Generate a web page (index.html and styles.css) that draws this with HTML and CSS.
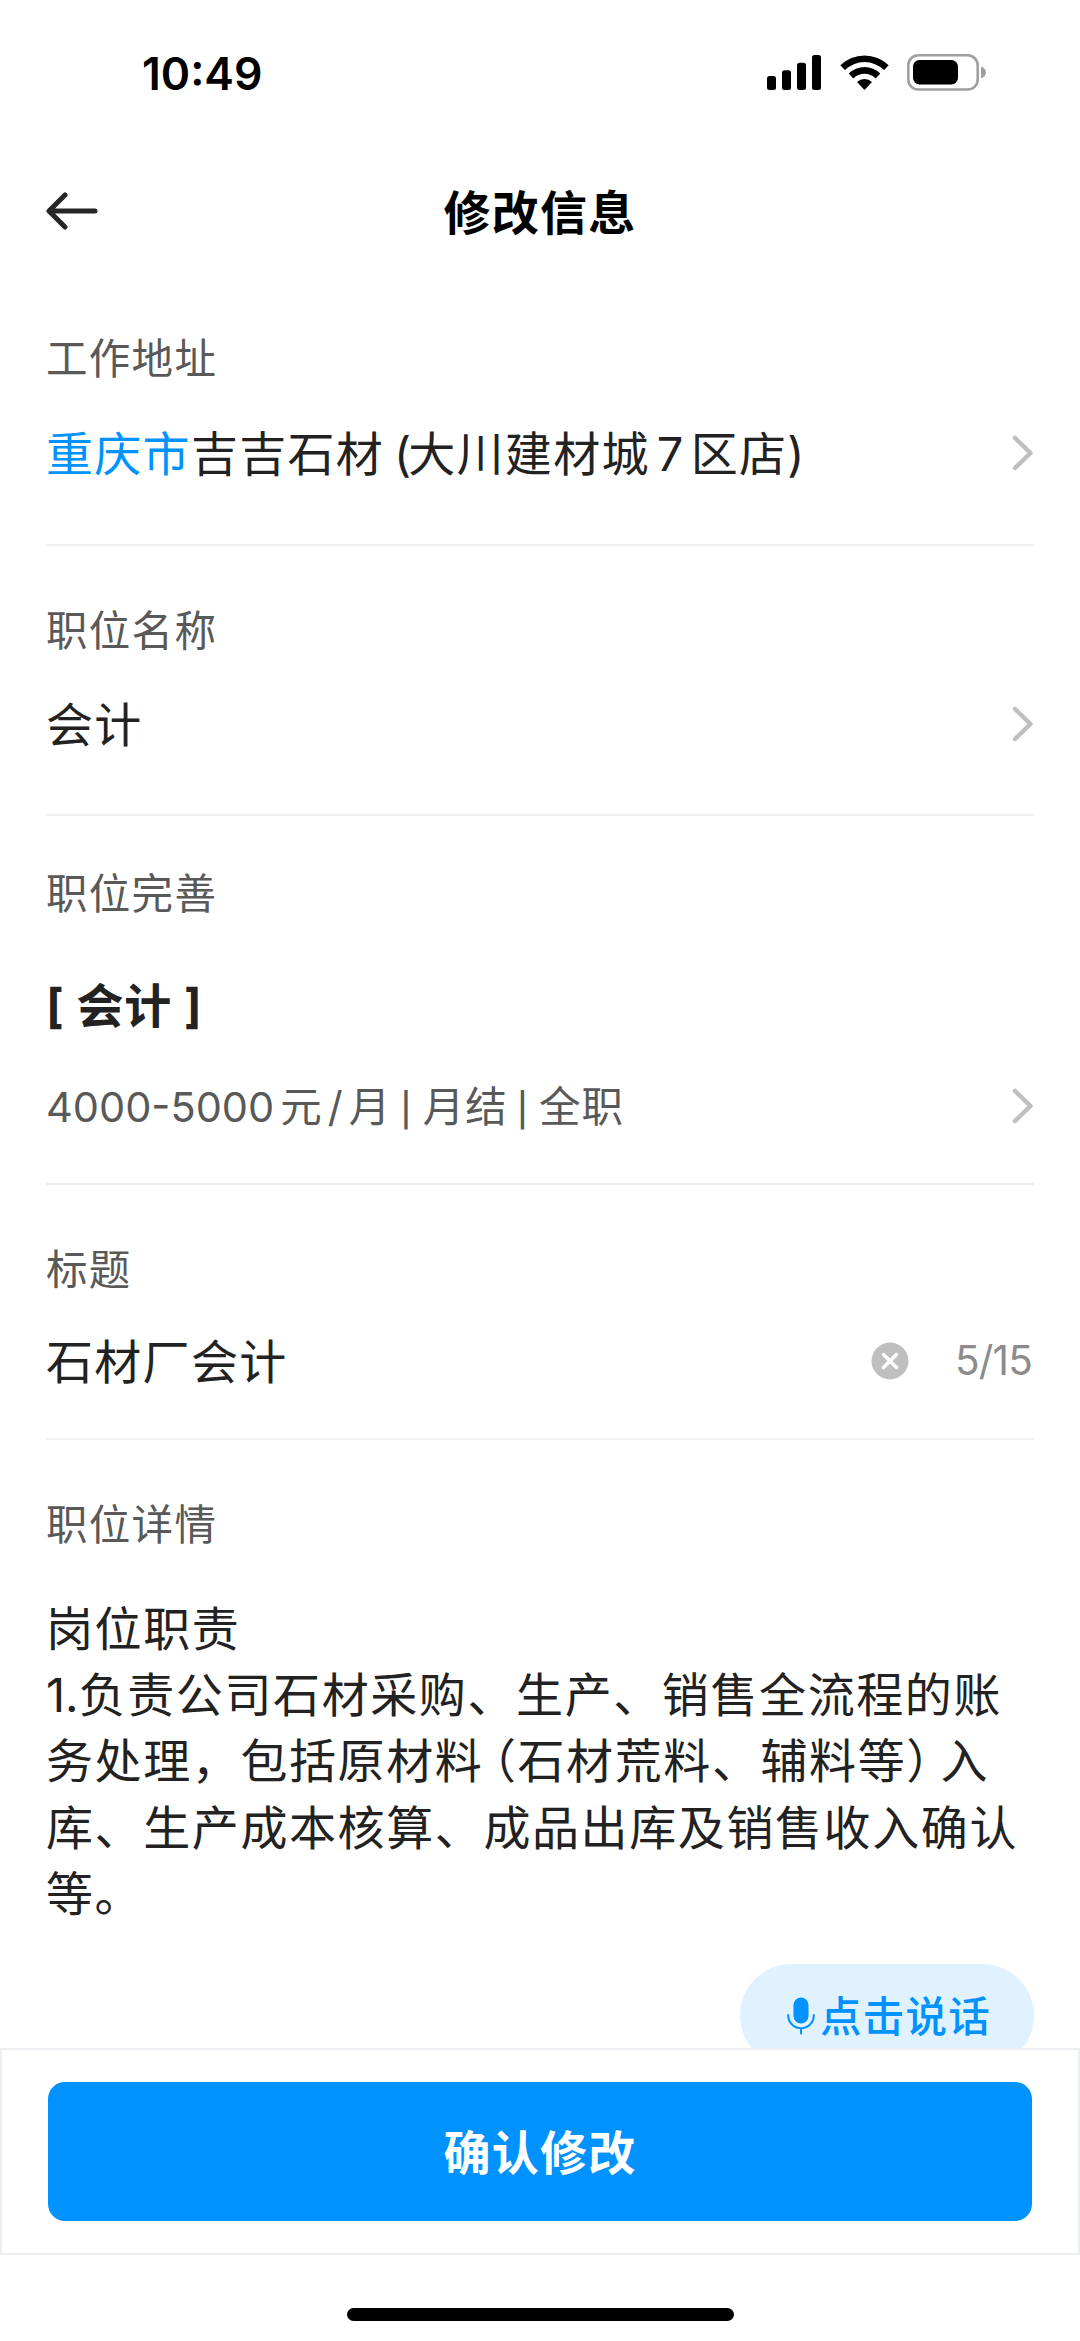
FILE: index.html
```html
<!DOCTYPE html>
<html lang="zh-CN">
<head>
    <meta charset="UTF-8"/>
    <title>修改信息</title>
    <link rel="stylesheet" href="styles.css">
</head>
<body>
<div class="status-bar">
    <span class="time">10:49</span>
    <svg class="status-icons" width="220" height="38" viewBox="0 0 220 38">
        <!-- 信号 -->
        <rect x="0" y="22" width="9" height="14" rx="2.5"/>
        <rect x="15" y="16.3" width="9" height="19.7" rx="2.5"/>
        <rect x="30" y="8.7" width="9" height="27.3" rx="2.5"/>
        <rect x="45" y="1" width="9" height="35" rx="2.5"/>
        <!-- WiFi -->
        <path d="M73.3 11.3a34.5 34.5 0 0 1 48.4 0l-4.6 4.8a28 28 0 0 0-39.2 0z"/>
        <path d="M81.7 19.6a22.5 22.5 0 0 1 31.6 0l-4.7 4.8a15.8 15.8 0 0 0-22.2 0z"/>
        <path d="M90 28a10.8 10.8 0 0 1 15 0l-7.5 8z"/>
        <!-- 电池 -->
        <rect x="141.3" y="1.3" width="69.4" height="34.2" rx="10" fill="none" stroke="#a0a0a0" stroke-width="2.6"/>
        <rect x="146" y="6" width="45" height="24.5" rx="6.5"/>
        <path d="M214 12.5q5 2 5 5.9t-5 5.9z" fill="#a0a0a0"/>
    </svg>
</div>

<header class="nav">
    <svg class="back" width="52" height="38" viewBox="0 0 52 38">
        <path d="M49 19H4M19 3L3 19L19 35"/>
    </svg>
    <h1>修改信息</h1>
</header>

<main class="form">
    <section class="item item-address">
        <h2>工作地址</h2>
        <div class="row">
            <span class="value"><span class="city">重庆市</span>吉吉石材<span class="open">(</span>大川建材城<span class="num">7</span>区店<span class="close">)</span></span>
            <svg class="arrow" width="22" height="36" viewBox="0 0 22 36"><path d="M3 3L18.5 18L3 33"/></svg>
        </div>
    </section>

    <section class="item item-name">
        <h2>职位名称</h2>
        <div class="row">
            <span class="value">会计</span>
            <svg class="arrow" width="22" height="36" viewBox="0 0 22 36"><path d="M3 3L18.5 18L3 33"/></svg>
        </div>
    </section>

    <section class="item item-more">
        <h2>职位完善</h2>
        <div class="job">[ 会计 ]</div>
        <div class="row">
            <span class="salary"><span class="digits">4000-5000</span>元<span class="slash">/</span>月<span class="bar">|</span>月结<span class="bar">|</span>全职</span>
            <svg class="arrow" width="22" height="36" viewBox="0 0 22 36"><path d="M3 3L18.5 18L3 33"/></svg>
        </div>
    </section>

    <section class="item item-title">
        <h2>标题</h2>
        <div class="row">
            <span class="value">石材厂会计</span>
            <svg class="clear" width="38" height="38" viewBox="0 0 38 38">
                <circle cx="19" cy="19" r="18.5"/>
                <path d="M12.5 12.5L25.5 25.5M25.5 12.5L12.5 25.5"/>
            </svg>
            <span class="count">5/15</span>
        </div>
    </section>

    <section class="item item-detail">
        <h2>职位详情</h2>
        <p class="detail">岗位职责<br><span class="index">1.</span>负责公司石材采购、生产、销售全流程的账务处理，包括原材料<span class="paren-l">（</span>石材荒料、辅料等<span class="paren-r">）</span>入<br>库、生产成本核算、成品出库及销售收入确认等。</p>
        <div class="speak">
            <svg width="28" height="38" viewBox="0 0 28 38">
                <rect x="6.5" y="0.5" width="15" height="26" rx="7.5" fill="#0092ff"/>
                <path d="M1.2 18v0.5a12.8 12.8 0 0 0 25.6 0V18M14 31.5V36.5" fill="none" stroke="#0092ff" stroke-width="2" stroke-linecap="round"/>
            </svg>
            <span>点击说话</span>
        </div>
    </section>
</main>

<footer class="footer">
    <button class="submit">确认修改</button>
</footer>
<div class="home"></div>
</body>
</html>
```
FILE: styles.css
```css
* {
    box-sizing: border-box;
}

body {
    margin: 0;
    width: 1080px;
    height: 2341px;
    overflow: hidden;
    background: #fff;
    color: #222;
    font-family: Inter, "Noto Sans CJK SC", sans-serif;
}

h1, h2, p {
    margin: 0;
    font-weight: normal;
}

.status-bar {
    display: flex;
    justify-content: space-between;
    align-items: center;
    height: 146px;
    padding: 0 93px 0 142px;
    color: #000;
}

.time {
    padding-top: 2px;
    font-size: 44.5px;
    font-weight: 600;
}

.nav {
    display: grid;
    grid-template-columns: 60px 1fr 60px;
    align-items: center;
    height: 131px;
    padding: 0 46px;
}

.nav h1 {
    padding-bottom: 4px;
    color: #000;
    font-size: 47px;
    font-weight: bold;
    letter-spacing: 1.2px;
    text-align: center;
}

.back {
    margin-bottom: 1px;
}

.back path {
    fill: none;
    stroke: #262626;
    stroke-width: 5;
    stroke-linecap: round;
    stroke-linejoin: round;
}

.form {
    height: 1771px;
    padding: 0 46px;
    overflow: hidden;
}

.item {
    border-bottom: 2px solid #eee;
}

.item h2 {
    height: 60px;
    line-height: 62px;
    font-size: 41.5px;
    letter-spacing: 1.3px;
    color: #595959;
}

.row {
    display: flex;
    align-items: center;
    height: 70px;
    line-height: 70px;
}

.value, .salary {
    flex: 1;
    white-space: nowrap;
}

.value {
    padding-top: 2px;
    font-size: 47px;
    letter-spacing: 1.3px;
}

.city {
    color: #0092ff;
}

.open {
    margin-left: 10px;
    letter-spacing: -3px;
}

.num {
    margin: 0 6px 0 7px;
}

.arrow path {
    fill: none;
    stroke: #bfbfbf;
    stroke-width: 4.5;
    stroke-linecap: round;
    stroke-linejoin: round;
}

.item-address {
    height: 269px;
    padding-top: 51px;
}

.item-address .row {
    margin-top: 30px;
}

.item-name {
    height: 270px;
    padding-top: 54px;
}

.item-name .row {
    margin-top: 29px;
}

.item-more {
    height: 369px;
    padding-top: 47px;
}

.job {
    height: 70px;
    margin-top: 48px;
    line-height: 70px;
    font-size: 47px;
    font-weight: bold;
    letter-spacing: 0.8px;
}

.item-more .row {
    margin-top: 30px;
}

.salary {
    padding-top: 1px;
    font-size: 41.5px;
    letter-spacing: 1px;
    color: #595959;
}

.digits {
    margin-right: 6px;
    letter-spacing: 0;
}

.slash {
    margin: 0 5px;
}

.bar {
    margin: 0 10px 0 9px;
    font-size: 33px;
    font-weight: 500;
    line-height: 1;
}

.item-title {
    height: 255px;
    padding-top: 54px;
    border-color: #f3f3f3;
}

.item-title .row {
    margin-top: 27px;
}

.clear circle {
    fill: #bfbfbf;
}

.clear path {
    stroke: #fff;
    stroke-width: 3.5;
    stroke-linecap: round;
}

.count {
    width: 125px;
    padding-right: 2px;
    font-size: 40.5px;
    letter-spacing: -0.8px;
    text-align: right;
    color: #8c8c8c;
}

.item-detail {
    padding-top: 54px;
    border: 0;
}

.detail {
    margin-top: 42px;
    font-size: 47px;
    line-height: 66.2px;
    letter-spacing: 1.6px;
}

.index {
    letter-spacing: 0;
}

/* 全角括号收窄 */
.paren-l, .paren-r {
    font-feature-settings: "halt";
}

.paren-l {
    margin-left: 9px;
}

.paren-r {
    margin-right: 9px;
}

.speak {
    display: flex;
    justify-content: center;
    align-items: center;
    gap: 5px;
    width: 294px;
    height: 103px;
    margin: 37px 0 0 auto;
    padding-left: 4px;
    border-radius: 52px;
    background: #e0f2ff;
    color: #0092ff;
    font-size: 41.5px;
    font-weight: 500;
    letter-spacing: 1.3px;
}

.speak span {
    padding-bottom: 4px;
}

.footer {
    height: 207px;
    padding: 32px 46px;
    border: 2px solid #eceef2;
}

.submit {
    display: block;
    width: 100%;
    height: 139px;
    padding: 0 0 5px;
    border: 0;
    border-radius: 17px;
    background: #0092ff;
    color: #fff;
    font: bold 47px Inter, "Noto Sans CJK SC", sans-serif;
    letter-spacing: 1.2px;
}

.home {
    width: 387px;
    height: 13px;
    margin: 53px auto 0;
    border-radius: 7px;
    background: #000;
}
```
